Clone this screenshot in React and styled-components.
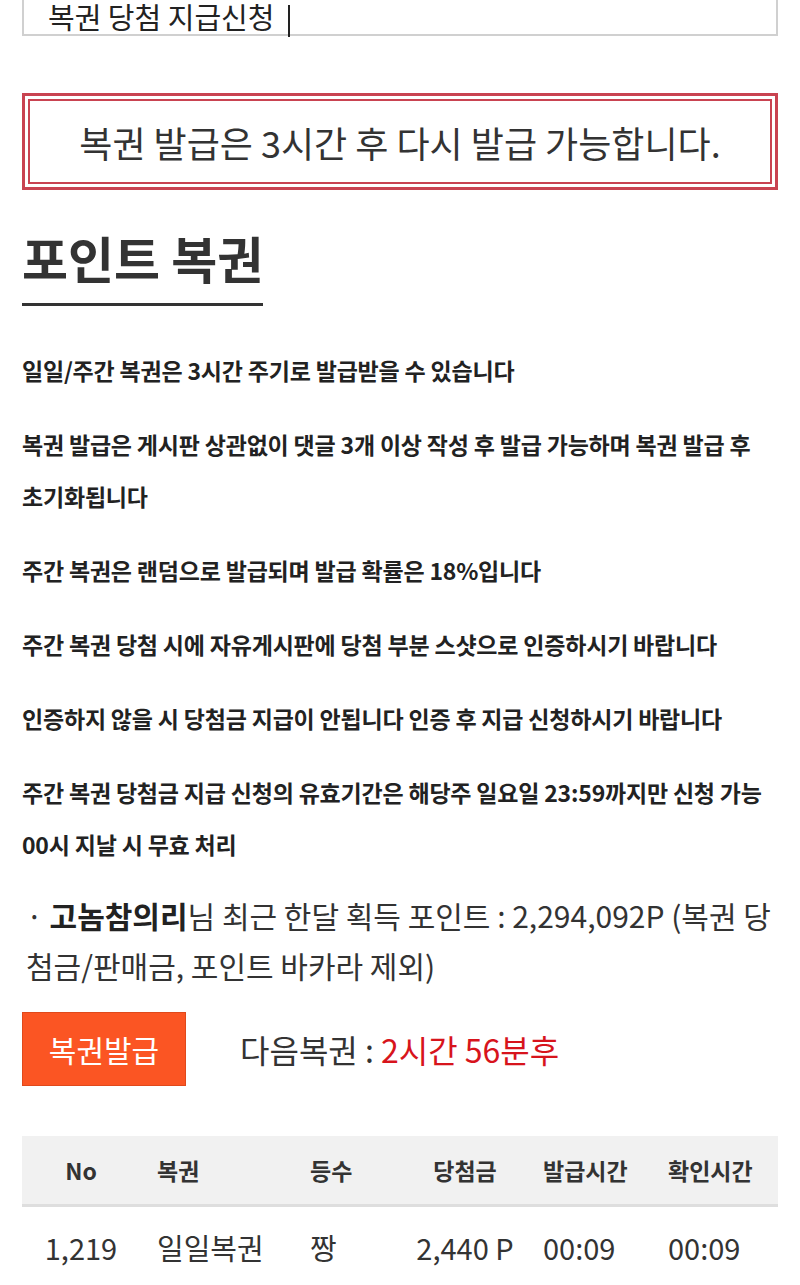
import React from "react"
import styled, { createGlobalStyle } from "styled-components"

const GlobalStyle = createGlobalStyle`
  html, body {
    margin: 0;
    padding: 0;
    background: #fff;
  }
  body {
    font-family: "Noto Sans CJK KR", "Noto Sans", sans-serif;
    color: #333;
    overflow-x: hidden;
  }
`

const Page = styled.div`
  padding: 0 22px;
  overflow: hidden;
`

const TitleBox = styled.div`
  margin-top: -30px;
  height: 66px;
  box-sizing: border-box;
  border: 2px solid #d0d0d0;
  display: flex;
  align-items: flex-end;
  padding-left: 24px;
`

const TitleText = styled.div`
  font-size: 29px;
  line-height: 29px;
  color: #222;
  margin-bottom: -3px;
  white-space: nowrap;
`

const Caret = styled.span`
  display: inline-block;
  width: 2px;
  height: 32px;
  background: #222;
  margin-left: 14px;
  vertical-align: -8px;
`

const Notice = styled.div`
  margin-top: 57px;
  height: 97px;
  box-sizing: border-box;
  border: 3px solid #c94351;
  padding: 3px;
`

const NoticeInner = styled.div`
  height: 100%;
  box-sizing: border-box;
  border: 2px solid #c94351;
  display: flex;
  align-items: center;
  justify-content: center;
  font-size: 36px;
  color: #333;
  white-space: nowrap;
`

const Heading = styled.h2`
  display: inline-block;
  margin: 36px 0 0;
  font-size: 50px;
  line-height: 62px;
  font-weight: 700;
  color: #333;
  padding-bottom: 15px;
  border-bottom: 3px solid #333;
`

const Rules = styled.div`
  margin-top: 38px;
  display: flex;
  flex-direction: column;
  gap: 22px;
`

const Rule = styled.p`
  margin: 0;
  font-size: 23px;
  line-height: 52px;
  font-weight: 700;
  color: #222;
  word-break: keep-all;
  letter-spacing: -0.2px;
`

const Points = styled.p`
  margin: 20px 0 0;
  font-size: 30px;
  line-height: 50px;
  color: #333;
  word-break: break-all;
  padding-left: 4px;
`

const Name = styled.b`
  font-weight: 700;
  color: #222;
`

const IssueRow = styled.div`
  margin-top: 22px;
  display: flex;
  align-items: center;
  gap: 54px;
`

const IssueButton = styled.button`
  width: 164px;
  height: 74px;
  border: 1px solid #e0491b;
  background: #fb5523;
  color: #fff;
  font-family: inherit;
  font-size: 30px;
  padding: 0;
  cursor: pointer;
`

const NextText = styled.div`
  font-size: 32px;
  color: #333;
`

const Red = styled.span`
  color: #d7141c;
`

const Table = styled.div`
  margin-top: 50px;
`

const Row = styled.div`
  display: grid;
  grid-template-columns: 118px 152px 108px 130px 125px 123px;
  align-items: center;
  height: ${p => (p.$head ? "68px" : "80px")};
  background: ${p => (p.$head ? "#f1f1f1" : "transparent")};
  border-bottom: ${p => (p.$head ? "3px solid #dedede" : "none")};
  font-size: ${p => (p.$head ? "23px" : "29px")};
  font-weight: ${p => (p.$head ? 700 : 400)};
  color: #333;
`

const Cell = styled.div`
  text-align: ${p => p.$align || "left"};
  padding-left: ${p => p.$pad || 0}px;
  white-space: nowrap;
`

const cols = [
  { align: "center", pad: 0 },
  { align: "left", pad: 17 },
  { align: "left", pad: 18 },
  { align: "center", pad: 0 },
  { align: "left", pad: 13 },
  { align: "left", pad: 13 },
]

const head = ["No", "복권", "등수", "당첨금", "발급시간", "확인시간"]
const rows = [["1,219", "일일복권", "짱", "2,440 P", "00:09", "00:09"]]

const rules = [
  "일일/주간 복권은 3시간 주기로 발급받을 수 있습니다",
  "복권 발급은 게시판 상관없이 댓글 3개 이상 작성 후 발급 가능하며 복권 발급 후 초기화됩니다",
  "주간 복권은 랜덤으로 발급되며 발급 확률은 18%입니다",
  "주간 복권 당첨 시에 자유게시판에 당첨 부분 스샷으로 인증하시기 바랍니다",
  "인증하지 않을 시 당첨금 지급이 안됩니다 인증 후 지급 신청하시기 바랍니다",
  "주간 복권 당첨금 지급 신청의 유효기간은 해당주 일요일 23:59까지만 신청 가능 00시 지날 시 무효 처리",
]

const App = () => {
  return (
    <Page>
      <GlobalStyle />
      <TitleBox>
        <TitleText>
          복권 당첨 지급신청
          <Caret />
        </TitleText>
      </TitleBox>

      <Notice>
        <NoticeInner>복권 발급은 3시간 후 다시 발급 가능합니다.</NoticeInner>
      </Notice>

      <Heading>포인트 복권</Heading>

      <Rules>
        {rules.map(r => (
          <Rule key={r}>{r}</Rule>
        ))}
      </Rules>

      <Points>
        · <Name>고놈참의리</Name>님 최근 한달 획득 포인트 : 2,294,092P (복권 당첨금/판매금, 포인트 바카라 제외)
      </Points>

      <IssueRow>
        <IssueButton>복권발급</IssueButton>
        <NextText>
          다음복권 : <Red>2시간 56분후</Red>
        </NextText>
      </IssueRow>

      <Table>
        <Row $head>
          {head.map((h, i) => (
            <Cell key={h} $align={cols[i].align} $pad={cols[i].pad}>
              {h}
            </Cell>
          ))}
        </Row>
        {rows.map(r => (
          <Row key={r[0]}>
            {r.map((c, i) => (
              <Cell key={i} $align={cols[i].align} $pad={cols[i].pad}>
                {c}
              </Cell>
            ))}
          </Row>
        ))}
      </Table>
    </Page>
  )
}

export default App
